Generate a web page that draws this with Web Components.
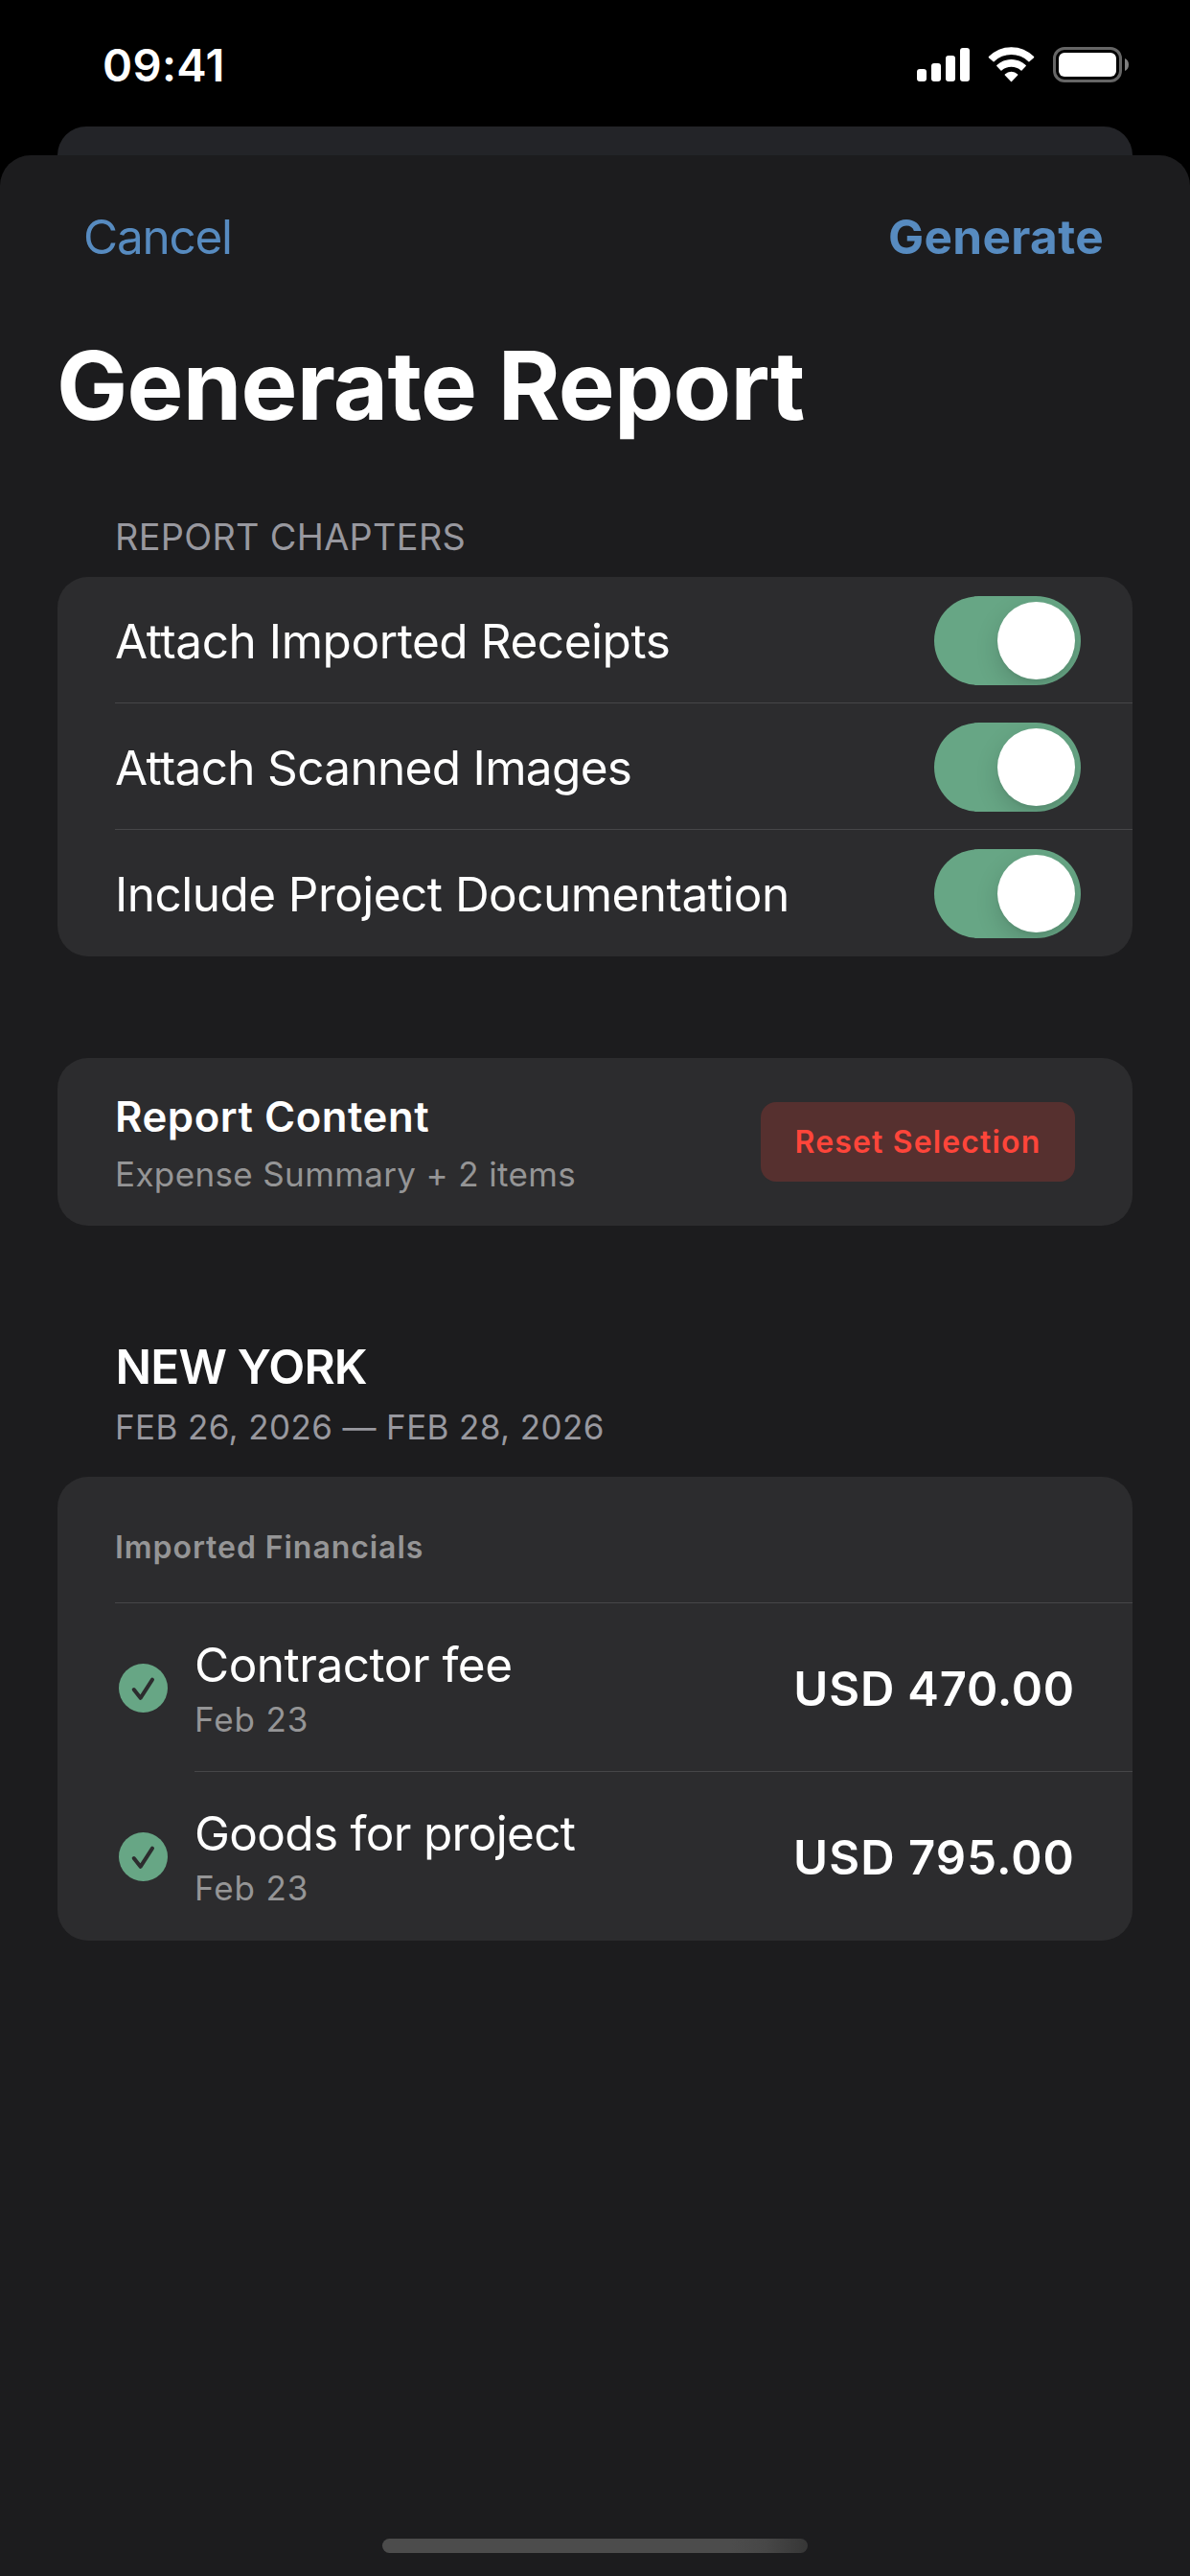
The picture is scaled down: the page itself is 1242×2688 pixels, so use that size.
<!DOCTYPE html>
<html lang="en">
<head>
<meta charset="utf-8">
<title>Generate Report</title>
<style>
  body {
    margin: 0;
    background: #000;
    color: #fff;
    font-family: Inter, "Liberation Sans", sans-serif;
    -webkit-font-smoothing: antialiased;
  }
</style>
</head>
<body>
<report-screen></report-screen>

<script>
const define = (name, html) => {
  customElements.define(name, class extends HTMLElement {
    constructor() {
      super();
      this.attachShadow({ mode: 'open' });
      const tpl = document.createElement('template');
      tpl.innerHTML = html;
      this.shadowRoot.appendChild(tpl.content.cloneNode(true));
    }
  });
};

/* --- status bar --- */
define('status-bar', `
  <style>
    :host {
      display: flex;
      justify-content: space-between;
      height: 132px;
      box-sizing: border-box;
      padding: 38px 64px 0 107px;
    }
    time { font-size: 47.2px; font-weight: 600; line-height: 60px; letter-spacing: .3px; }
    svg { display: block; margin-top: 8px; }
  </style>
  <time>09:41</time>
  <svg width="222" height="44" viewBox="956 46 222 44">
    <g fill="#fff">
      <rect x="957" y="72" width="10" height="13" rx="3"/>
      <rect x="972" y="66" width="10" height="19" rx="3"/>
      <rect x="987" y="58" width="10" height="27" rx="3"/>
      <rect x="1002" y="50" width="10" height="35" rx="3"/>
      <g stroke="#fff" stroke-width="1.4" stroke-linejoin="round">
        <path d="M1032.4 59.6A32.2 32.2 0 0 1 1078.6 59.6L1073.9 63.7A26.8 26.8 0 0 0 1037.1 63.7Z"/>
        <path d="M1040.8 68.6A21 21 0 0 1 1070.2 68.6L1066 72.9A16 16 0 0 0 1045 72.9Z"/>
        <path d="M1049.3 77.9A9 9 0 0 1 1061.7 77.9L1055.5 84.4Z"/>
      </g>
      <rect x="1105" y="55" width="60" height="25" rx="6"/>
    </g>
    <rect x="1100.5" y="50.5" width="69" height="34" rx="10.5" fill="none" stroke="#666" stroke-width="3"/>
    <path d="M1174 61C1176.6 62 1178 64.5 1178 67.5S1176.6 73 1174 74Z" fill="#7f7f7f"/>
  </svg>
`);

/* --- modal sheet with the edge of the page behind it --- */
define('modal-sheet', `
  <style>
    :host { display: flex; flex-direction: column; flex: 1; }
    .behind { height: 30px; margin: 0 60px; border-radius: 30px 30px 0 0; background: #232428; }
    .sheet {
      flex: 1;
      display: flex;
      flex-direction: column;
      box-sizing: border-box;
      padding: 55px 60px 24px;
      border-radius: 32px 32px 0 0;
      background: #1c1c1e;
    }
  </style>
  <div class="behind"></div>
  <div class="sheet"><slot></slot></div>
`);

define('sheet-nav', `
  <style>
    :host {
      display: flex;
      justify-content: space-between;
      padding: 0 30px 0 27px;
      color: #578bc0;
      font-size: 49.5px;
      line-height: 60px;
    }
    .cancel { letter-spacing: -1.25px; }
    .done { font-weight: 700; letter-spacing: .34px; }
  </style>
  <span class="cancel"><slot name="cancel"></slot></span>
  <span class="done"><slot name="done"></slot></span>
`);

define('page-title', `
  <style>
    :host {
      display: block;
      margin-top: 65px;
      font-size: 99px;
      font-weight: 700;
      line-height: 120px;
      letter-spacing: -.8px;
      text-indent: -1px;
    }
  </style>
  <slot></slot>
`);

/* --- grouped list --- */
define('list-group', `
  <style>
    :host { display: block; }
    .header { padding-left: 60px; }
    .card { border-radius: 32px; background: #2c2c2e; overflow: hidden; }
  </style>
  <div class="header"><slot name="header"></slot></div>
  <div class="card"><slot></slot></div>
`);

define('group-caption', `
  <style>
    :host {
      display: block;
      padding: 73px 0 17px;
      color: #98989f;
      font-size: 37.8px;
      line-height: 50px;
      letter-spacing: .34px;
    }
  </style>
  <slot></slot>
`);

define('trip-header', `
  <style>
    :host { display: block; padding: 117px 0 22px; }
    .place { font-size: 49.5px; font-weight: 600; line-height: 60px; letter-spacing: -.83px; text-indent: .5px; }
    .dates { padding-top: 3px; color: #98989f; font-size: 35px; line-height: 60px; letter-spacing: .38px; }
  </style>
  <div class="place"><slot name="place"></slot></div>
  <div class="dates"><slot name="dates"></slot></div>
`);

define('toggle-switch', `
  <style>
    :host {
      display: flex;
      justify-content: flex-end;
      box-sizing: border-box;
      width: 153px;
      height: 93px;
      padding: 6px;
      border-radius: 46.5px;
      background: #67a685;
      overflow: hidden;
    }
    .knob {
      width: 81px;
      height: 81px;
      border-radius: 50%;
      background: #fff;
      box-shadow: 0 9px 24px rgba(0, 0, 0, .15), 0 3px 3px rgba(0, 0, 0, .04);
    }
  </style>
  <div class="knob"></div>
`);

define('toggle-row', `
  <style>
    :host { display: block; padding-left: 60px; }
    .row {
      display: flex;
      align-items: center;
      justify-content: space-between;
      box-sizing: border-box;
      height: 132px;
      padding: 2px 54px 0 0;
      border-bottom: 1px solid #464648;
    }
    :host(:last-child) .row { border-color: transparent; }
    .label { font-size: 49.5px; line-height: 60px; letter-spacing: var(--track, -.5px); }
  </style>
  <div class="row">
    <span class="label"><slot></slot></span>
    <toggle-switch></toggle-switch>
  </div>
`);

define('content-summary', `
  <style>
    :host {
      display: flex;
      align-items: center;
      justify-content: space-between;
      box-sizing: border-box;
      height: 175px;
      padding: 0 60px;
    }
    .text { padding-top: 6px; }
    .title { font-size: 43.7px; font-weight: 600; line-height: 60px; letter-spacing: .53px; }
    .detail { font-size: 35px; line-height: 58px; letter-spacing: .36px; color: #959596; }
    button {
      width: 328px;
      height: 83px;
      padding: 0;
      border: 0;
      border-radius: 16px;
      background: #56302f;
      color: #ff453a;
      font: 600 32px/83px Inter, "Liberation Sans", sans-serif;
      letter-spacing: 1.15px;
    }
  </style>
  <div class="text">
    <div class="title"><slot name="title"></slot></div>
    <div class="detail"><slot name="detail"></slot></div>
  </div>
  <button><slot name="action"></slot></button>
`);

define('sub-header', `
  <style>
    :host {
      display: block;
      box-sizing: border-box;
      height: 132px;
      margin-left: 60px;
      padding-top: 44px;
      border-bottom: 1px solid #464648;
      color: #959596;
      font-size: 32px;
      font-weight: 600;
      line-height: 60px;
      letter-spacing: .94px;
    }
  </style>
  <slot></slot>
`);

define('check-mark', `
  <style>
    :host { display: block; width: 51px; height: 51px; }
    svg { display: block; }
  </style>
  <svg width="51" height="51" viewBox="0 0 51 51">
    <circle cx="25.5" cy="25.5" r="25.5" fill="#67a685"/>
    <path d="M15.7 27L22.6 35.8L35 16.7" fill="none" stroke="#2c2c2e" stroke-width="4" stroke-linecap="round" stroke-linejoin="round"/>
  </svg>
`);

define('expense-row', `
  <style>
    :host { display: flex; align-items: center; height: 176px; padding-left: 64px; }
    .row {
      flex: 1;
      display: flex;
      align-items: center;
      justify-content: space-between;
      box-sizing: border-box;
      height: 176px;
      margin-left: 28px;
      padding-right: 60px;
      border-bottom: 1px solid #464648;
    }
    :host(:last-child) .row { border-color: transparent; }
    check-mark { margin-top: 1px; }
    .text { padding-top: 10px; line-height: 57px; }
    .name { font-size: 49.5px; letter-spacing: var(--track, -.6px); }
    .date { font-size: 35px; letter-spacing: .88px; color: #959596; }
    .amount { padding-top: 4px; font-size: 49px; font-weight: 600; letter-spacing: var(--amount-track, 1px); }
  </style>
  <check-mark></check-mark>
  <div class="row">
    <div class="text">
      <div class="name"><slot name="name"></slot></div>
      <div class="date"><slot name="date"></slot></div>
    </div>
    <span class="amount"><slot name="amount"></slot></span>
  </div>
`);

define('home-indicator', `
  <style>
    :host {
      display: block;
      width: 444px;
      height: 15px;
      margin: auto auto 0;
      border-radius: 7.5px;
      background: linear-gradient(90deg, #4c4c4c 82%, #474747 90%, #363636);
    }
  </style>
`);

/* --- screen --- */
define('report-screen', `
  <style>
    :host { display: flex; flex-direction: column; width: 1242px; height: 2688px; overflow: hidden; }
    .summary { margin-top: 106px; }
  </style>
  <status-bar></status-bar>
  <modal-sheet>
    <sheet-nav>
      <span slot="cancel">Cancel</span>
      <span slot="done">Generate</span>
    </sheet-nav>
    <page-title>Generate Report</page-title>

    <list-group>
      <group-caption slot="header">REPORT CHAPTERS</group-caption>
      <toggle-row style="--track: -.44px">Attach Imported Receipts</toggle-row>
      <toggle-row style="--track: -.68px">Attach Scanned Images</toggle-row>
      <toggle-row style="--track: -.54px">Include Project Documentation</toggle-row>
    </list-group>

    <list-group class="summary">
      <content-summary>
        <span slot="title">Report Content</span>
        <span slot="detail">Expense Summary + 2 items</span>
        <span slot="action">Reset Selection</span>
      </content-summary>
    </list-group>

    <list-group>
      <trip-header slot="header">
        <span slot="place">NEW YORK</span>
        <span slot="dates">FEB 26, 2026 — FEB 28, 2026</span>
      </trip-header>
      <sub-header>Imported Financials</sub-header>
      <expense-row style="--track: -.5px; --amount-track: .8px">
        <span slot="name">Contractor fee</span>
        <span slot="date">Feb 23</span>
        <span slot="amount">USD 470.00</span>
      </expense-row>
      <expense-row style="--track: -.68px; --amount-track: 1.06px">
        <span slot="name">Goods for project</span>
        <span slot="date">Feb 23</span>
        <span slot="amount">USD 795.00</span>
      </expense-row>
    </list-group>
    <home-indicator></home-indicator>
  </modal-sheet>
`);
</script>
</body>
</html>
